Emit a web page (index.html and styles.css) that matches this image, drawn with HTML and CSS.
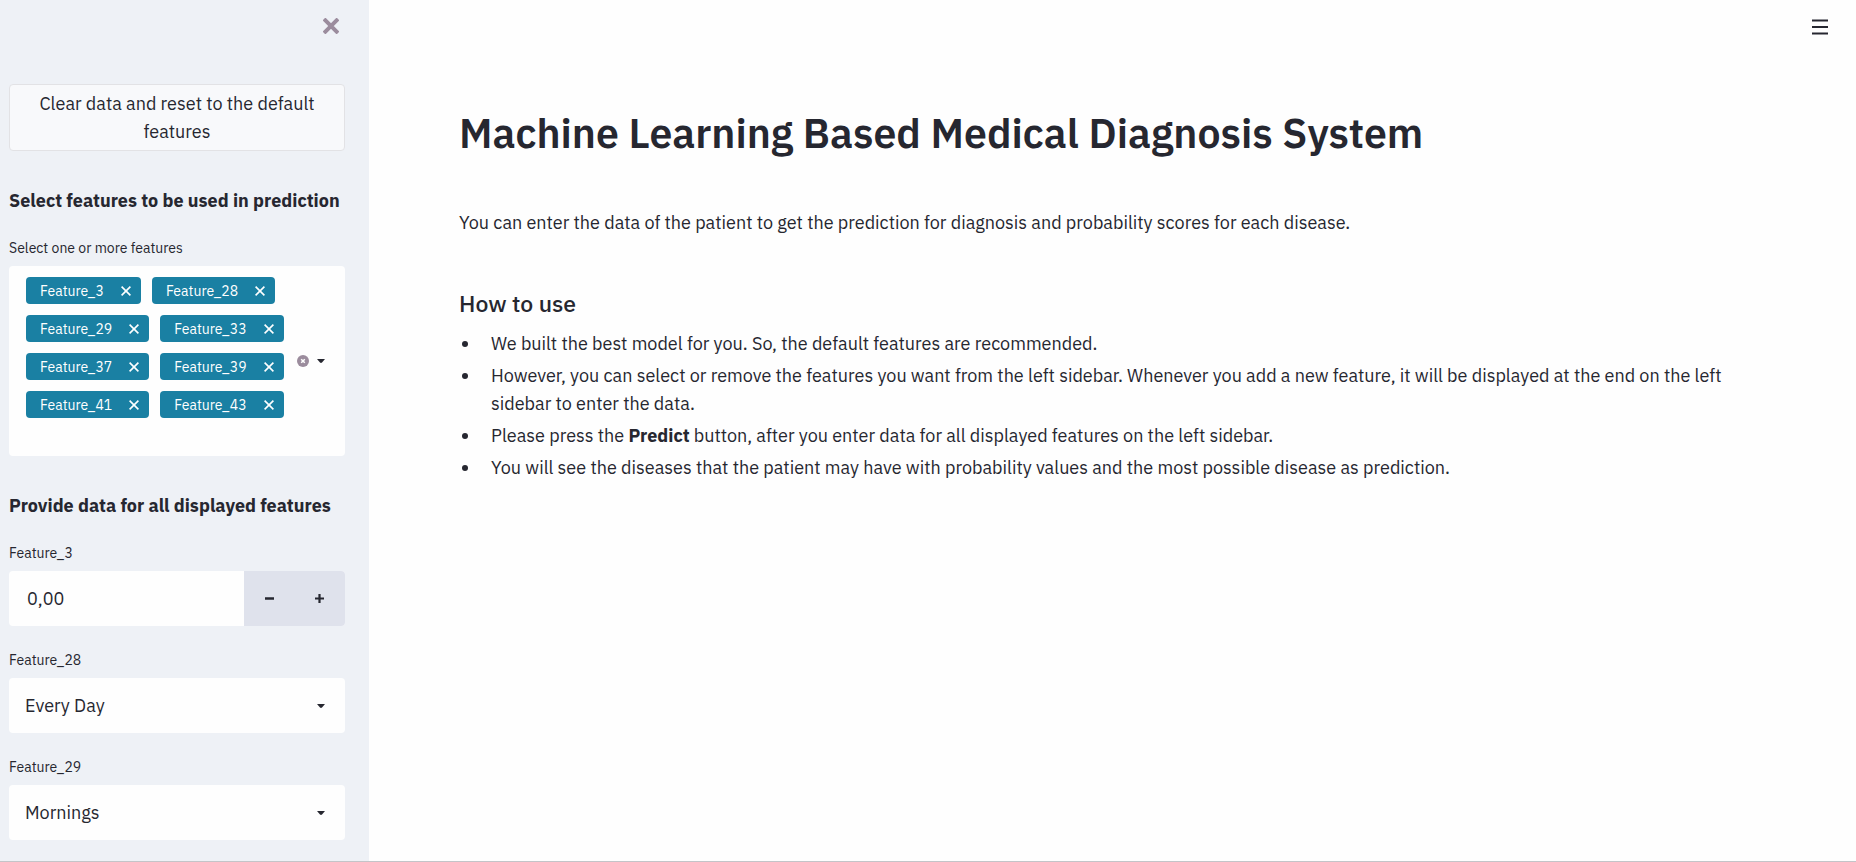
FILE: index.html
```html
<!DOCTYPE html>
<html lang="en">
<head>
<meta charset="utf-8">
<meta name="viewport" content="width=device-width, initial-scale=1">
<title>Machine Learning Based Medical Diagnosis System</title>
<link rel="stylesheet" href="styles.css">
</head>
<body>
<svg class="sprite" aria-hidden="true">
  <symbol id="cross" viewBox="0 0 10 10"><path d="M.6.6l8.8 8.8M9.4.6L.6 9.4" fill="none" stroke="currentColor" stroke-width="1.6"/></symbol>
  <symbol id="caret" viewBox="0 0 8 4"><path d="M0 0h8L5 3.6q-1 .8-2 0z" fill="currentColor"/></symbol>
</svg>
<div class="app">
  <aside class="sidebar">
    <div class="sidebar-top">
      <button class="icon-button close" type="button" aria-label="Close sidebar">
        <svg width="16" height="16" viewBox="0 0 16 16"><path d="M2.4 2.4l11.2 11.2M13.6 2.4L2.4 13.6" stroke="currentColor" stroke-width="4" stroke-linecap="square" fill="none"/></svg>
      </button>
    </div>
    <button class="reset" type="button">Clear data and reset to the default features</button>

    <h2 class="section-title">Select features to be used in prediction</h2>
    <p class="label" id="features-label">Select one or more features</p>
    <div class="multiselect" role="group" aria-labelledby="features-label">
      <ul class="tags">
        <li class="tag">Feature_3<button class="icon-button" type="button" aria-label="Remove Feature_3"><svg width="10" height="10"><use href="#cross"/></svg></button></li>
        <li class="tag">Feature_28<button class="icon-button" type="button" aria-label="Remove Feature_28"><svg width="10" height="10"><use href="#cross"/></svg></button></li>
        <li class="tag">Feature_29<button class="icon-button" type="button" aria-label="Remove Feature_29"><svg width="10" height="10"><use href="#cross"/></svg></button></li>
        <li class="tag">Feature_33<button class="icon-button" type="button" aria-label="Remove Feature_33"><svg width="10" height="10"><use href="#cross"/></svg></button></li>
        <li class="tag">Feature_37<button class="icon-button" type="button" aria-label="Remove Feature_37"><svg width="10" height="10"><use href="#cross"/></svg></button></li>
        <li class="tag">Feature_39<button class="icon-button" type="button" aria-label="Remove Feature_39"><svg width="10" height="10"><use href="#cross"/></svg></button></li>
        <li class="tag">Feature_41<button class="icon-button" type="button" aria-label="Remove Feature_41"><svg width="10" height="10"><use href="#cross"/></svg></button></li>
        <li class="tag">Feature_43<button class="icon-button" type="button" aria-label="Remove Feature_43"><svg width="10" height="10"><use href="#cross"/></svg></button></li>
      </ul>
      <div class="multiselect-actions">
        <button class="icon-button clear" type="button" aria-label="Clear all">
          <svg width="12" height="12" viewBox="0 0 12 12"><circle cx="6" cy="6" r="6" fill="currentColor"/><path d="M4.2 4.2l3.6 3.6M7.8 4.2L4.2 7.8" stroke="#fff" stroke-width="1.5"/></svg>
        </button>
        <button class="icon-button" type="button" aria-label="Open feature list"><svg width="8" height="4"><use href="#caret"/></svg></button>
      </div>
    </div>

    <h2 class="section-title">Provide data for all displayed features</h2>
    <label class="label" for="feature-3">Feature_3</label>
    <div class="number">
      <input id="feature-3" class="number-input" type="text" inputmode="decimal" value="0,00">
      <button class="step" type="button" aria-label="Decrease"><svg width="9" height="9" viewBox="0 0 9 9"><path d="M0 4.5h9" stroke="currentColor" stroke-width="2.4"/></svg></button>
      <button class="step" type="button" aria-label="Increase"><svg width="9" height="9" viewBox="0 0 9 9"><path d="M0 4.5h9M4.5 0v9" stroke="currentColor" stroke-width="2.2"/></svg></button>
    </div>

    <label class="label field" for="feature-28">Feature_28</label>
    <div class="select-wrap">
      <select id="feature-28" class="select"><option>Every Day</option></select>
      <svg class="select-caret" width="8" height="4" aria-hidden="true"><use href="#caret"/></svg>
    </div>

    <label class="label field" for="feature-29">Feature_29</label>
    <div class="select-wrap">
      <select id="feature-29" class="select"><option>Mornings</option></select>
      <svg class="select-caret" width="8" height="4" aria-hidden="true"><use href="#caret"/></svg>
    </div>
  </aside>

  <div class="content">
    <header class="toolbar">
      <button class="icon-button" type="button" aria-label="Menu">
        <svg width="16" height="16" viewBox="0 0 16 16"><path d="M0 1.5h16M0 8h16M0 14.5h16" stroke="currentColor" stroke-width="2"/></svg>
      </button>
    </header>
    <main class="main">
      <h1 class="title">Machine Learning Based Medical Diagnosis System</h1>
      <p class="intro">You can enter the data of the patient to get the prediction for diagnosis and probability scores for each disease.</p>
      <h2 class="subtitle">How to use</h2>
      <ul class="steps">
        <li>We built the best model for you. So, the default features are recommended.</li>
        <li>However, you can select or remove the features you want from the left sidebar. Whenever you add a new feature, it will be displayed at the end on the left sidebar to enter the data.</li>
        <li>Please press the <strong>Predict</strong> button, after you enter data for all displayed features on the left sidebar.</li>
        <li>You will see the diseases that the patient may have with probability values and the most possible disease as prediction.</li>
      </ul>
    </main>
  </div>
</div>
</body>
</html>
```
FILE: styles.css
```css
* { box-sizing: border-box; }

body {
  margin: 0;
  background: #fefefe;
  color: #262730;
  font-family: "IBM Plex Sans", "Noto Sans", sans-serif;
  font-size: 18px;
  font-weight: 400;
  line-height: 28px;
}

h1, h2, p, ul { margin: 0; padding: 0; }

button, input, select {
  font: inherit;
  color: inherit;
  border: 0;
}

.sprite { position: absolute; width: 0; height: 0; }

.icon-button {
  display: flex;
  padding: 0;
  background: none;
  cursor: pointer;
}

.app {
  display: flex;
  min-height: 100vh;
  border-bottom: 1px solid #c4c4c8;
}

.sidebar {
  flex: none;
  width: 369px;
  padding: 0 24px 20px 9px;
  background: #eef1f6;
}

.sidebar-top {
  display: flex;
  justify-content: flex-end;
  height: 84px;
  padding: 18px 6px 0 0;
}

.close { height: 16px; color: #9b8c9d; }

.reset {
  display: block;
  width: 100%;
  padding: 5px 12px 4px;
  border: 1px solid #e2e2e5;
  border-radius: 4px;
  background: #f8f9fb;
  line-height: 28px;
}

.section-title {
  margin: 36px 0 23px;
  font-size: 18px;
  font-weight: 700;
  line-height: 28px;
  white-space: nowrap;
}

.label {
  display: block;
  margin-bottom: 8px;
  font-size: 14px;
  line-height: 20px;
}

.field { margin-top: 24px; }

.multiselect {
  display: flex;
  align-items: center;
  justify-content: space-between;
  padding: 11px 20px 38px 17px;
  border-radius: 4px;
  background: #fefefe;
}

.tags {
  display: flex;
  flex-wrap: wrap;
  gap: 11px;
  width: 264px;
  list-style: none;
}

.tag {
  display: flex;
  align-items: center;
  gap: 17px;
  height: 27px;
  padding: 0 10px 0 14px;
  border-radius: 4px;
  background: #1a80a3;
  color: #fff;
  font-size: 14px;
  line-height: 20px;
}

.multiselect-actions {
  display: flex;
  align-items: center;
  gap: 8px;
  padding-top: 27px;
}

.clear { color: #9b8c9d; }

.number {
  display: flex;
  overflow: hidden;
  height: 55px;
  border-radius: 4px;
  background: #fefefe;
}

.number-input {
  flex: 1;
  min-width: 0;
  padding: 0 18px;
  background: none;
}

.step {
  display: flex;
  flex: 0 0 15%;
  align-items: center;
  justify-content: center;
  background: #dfe2ec;
}

.select-wrap { position: relative; }

.select {
  display: block;
  width: 100%;
  height: 55px;
  padding: 0 40px 0 16px;
  border-radius: 4px;
  background: #fefefe;
  appearance: none;
}

.select-caret {
  position: absolute;
  top: 26px;
  right: 20px;
  pointer-events: none;
}

.content {
  flex: 1;
  min-width: 0;
}

.toolbar {
  display: flex;
  justify-content: flex-end;
  height: 84px;
  padding: 19px 28px 0 0;
}

.toolbar .icon-button { height: 16px; }

.main { padding: 20px 90px 80px; }

.title {
  font-size: 41px;
  font-weight: 600;
  line-height: 58px;
}

.intro { margin: 47px 0 51px; }

.subtitle {
  margin-bottom: 12px;
  font-size: 23px;
  font-weight: 500;
  line-height: 30px;
}

.steps {
  display: grid;
  gap: 4px;
  padding-left: 22px;
}

.steps li { padding-left: 10px; }

.steps strong { font-weight: 700; }
```
